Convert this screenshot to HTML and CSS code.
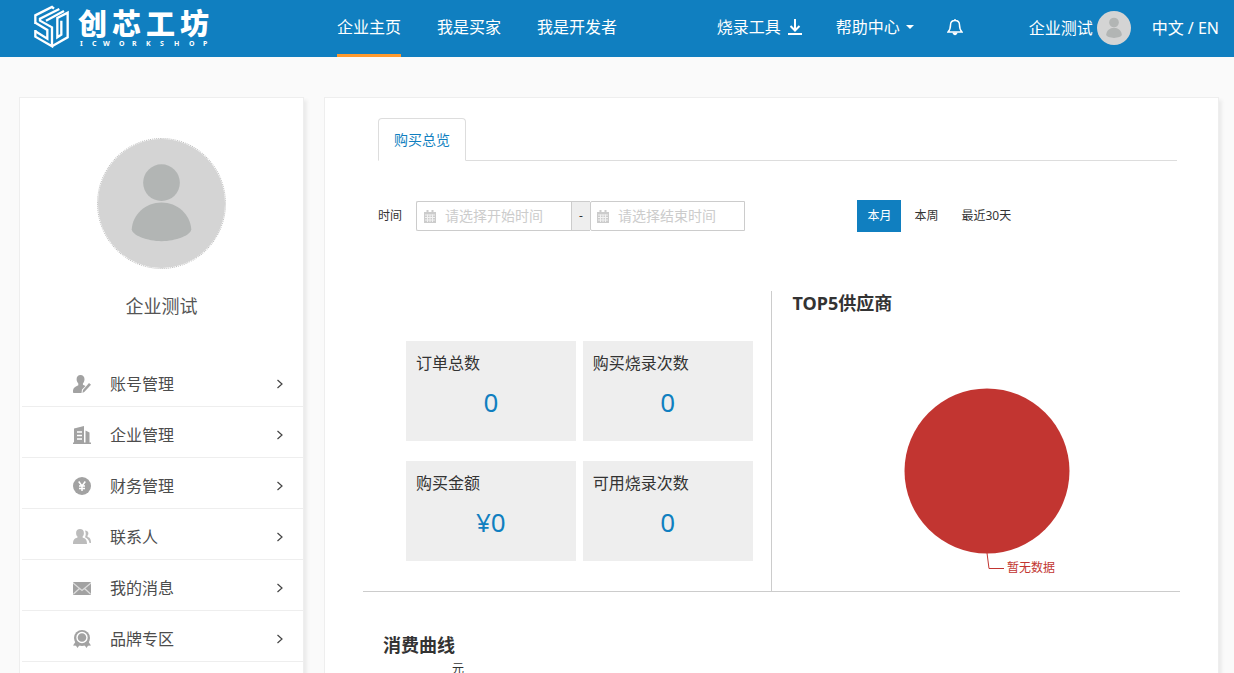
FILE: index.html
```html
<!DOCTYPE html>
<html lang="zh-CN">
<head>
<meta charset="utf-8">
<title>创芯工坊</title>
<link rel="stylesheet" href="styles.css">
</head>
<body>
<svg class="sprite" aria-hidden="true">
  <symbol id="person" viewBox="0 0 128 130">
    <circle cx="64" cy="44" r="18.500"/>
    <path d="M34 91C35 76 48 64 64 64S93 76 94 91C94 97 78 103 64 103S34 97 34 91Z"/>
  </symbol>
  <symbol id="chevron" viewBox="0 0 8 10"><path d="M1.500 1L6 5L1.500 9" fill="none" stroke="#444" stroke-width="1.200"/></symbol>
  <symbol id="calendar" viewBox="0 0 12 13">
    <path d="M0 2h12v11H0z"/><path d="M2.500 0h2v3h-2zM7.500 0h2v3h-2z"/>
    <path d="M1 5h10M1 7.500h10M1 10h10M3.500 4.500v7.500M6 4.500v7.500M8.500 4.500v7.500" stroke="#fff" stroke-width="1" opacity=".75"/>
  </symbol>
</svg>

<header class="topbar">
  <a class="logo" href="#" aria-label="创芯工坊">
    <svg width="180" height="54" viewBox="0 0 180 54">
      <g transform="translate(-13 0) scale(.3333)" fill="none" stroke="#fff" stroke-width="7">
        <path d="M46 72V46L96 21L102 26"/>
        <path d="M46 68L82 90V116L46 94"/>
        <path d="M46 90V110L96 139V82L60 62V56L118 27"/>
        <path d="M78 62L132 33"/>
        <path d="M96 139L143 112V38L112 54V112L124 104V62"/>
      </g>
      <text class="logo-name" x="45 79 113 147" y="35">创芯工坊</text>
      <text class="logo-sub" x="47 59 70 86 99 113 127 141 156 170" y="46">ICWORKSHOP</text>
    </svg>
  </a>
  <nav class="main-nav">
    <a class="active" href="#">企业主页</a>
    <a href="#">我是买家</a>
    <a href="#">我是开发者</a>
  </nav>
  <nav class="tools">
    <a href="#">烧录工具
      <svg width="16" height="16" viewBox="0 0 16 16" fill="none" stroke="#fff" stroke-width="2"><path d="M8 0v11M3.500 7L8 11.500L12.500 7M1 15h14"/></svg>
    </a>
    <a href="#">帮助中心
      <svg width="8" height="4" viewBox="0 0 8 4" fill="#fff"><path d="M0 0h8L4 4z"/></svg>
    </a>
    <a href="#" aria-label="通知">
      <svg width="16" height="18" viewBox="0 0 16 18" fill="none" stroke="#fff" stroke-width="1.500"><path d="M8 1v1.500M1 14c2-2 2.500-3.500 2.500-7C3.500 4 5.500 2.500 8 2.500S12.500 4 12.500 7c0 3.500.5 5 2.500 7z"/><path d="M5.500 14.500h5C10 18 6 18 5.500 14.500z" fill="#fff" stroke="none"/></svg>
    </a>
  </nav>
  <div class="account">
    <a class="user" href="#">企业测试 <svg class="mini-avatar"><use href="#person"/></svg></a>
    <a href="#">中文 / EN</a>
  </div>
</header>

<div class="layout">
  <aside class="card sidebar">
    <svg class="avatar"><use href="#person"/></svg>
    <h2 class="company">企业测试</h2>
    <nav class="menu">
      <a href="#">
        <svg class="icon" viewBox="0 0 18 18"><path d="M7.500 0C10 0 11.500 1.700 11.500 4.200c0 2-.8 3.200-1.600 4.200v1.400l2.600 1.200L9 14.500 8.500 18H1c-.7 0-1-.4-1-1.200 0-3.800 1.500-4.800 5.300-6.600V8.400C4.300 7.300 3.600 6 3.600 4.200 3.600 1.700 5 0 7.500 0z"/><path d="M16 8l2 1.800-6.500 7L9.500 18l.5-3z"/></svg>
        <span>账号管理</span><svg class="chevron"><use href="#chevron"/></svg>
      </a>
      <a href="#">
        <svg class="icon" viewBox="0 0 18 18"><path d="M0 16.500h1V2.500L11 0v16.500h1.500V4.500l4 2v10H18V18H0z"/><path d="M4 6h5M4 9.500h5M4 13h5" stroke="#fff" stroke-width="1.500"/></svg>
        <span>企业管理</span><svg class="chevron"><use href="#chevron"/></svg>
      </a>
      <a href="#">
        <svg class="icon" viewBox="0 0 18 18"><circle cx="9" cy="9" r="9"/><path d="M5.700 4.500L9 9l3.300-4.500M9 9v5M6 9h6M6 11.500h6" fill="none" stroke="#fff" stroke-width="1.500"/></svg>
        <span>财务管理</span><svg class="chevron"><use href="#chevron"/></svg>
      </a>
      <a href="#">
        <svg class="icon pale" viewBox="0 0 18 18"><path d="M7 1c2.500 0 3.900 1.600 3.900 3.900 0 1.700-.6 2.800-1.300 3.600v1C12.500 10.600 14 11.500 14 16H0c0-4.500 1.500-5.400 4.500-6.500v-1C3.700 7.700 3.100 6.600 3.100 4.900 3.100 2.600 4.500 1 7 1z"/><path d="M12 2.500c3 0 4.500 2.800 2.500 5.300v1c2.500 1 3.500 2.200 3.500 6.200h-1.500C16 12 14.500 10.500 12 9.300c1-2.300 1-4.500 0-6.800z"/></svg>
        <span>联系人</span><svg class="chevron"><use href="#chevron"/></svg>
      </a>
      <a href="#">
        <svg class="icon" viewBox="0 0 18 18"><rect y="3" width="18" height="13" rx="1"/><path d="M0 4l9 7.500L18 4M0.500 15L6.500 9.500M17.500 15L11.500 9.500" fill="none" stroke="#ddd" stroke-width="1.300"/></svg>
        <span>我的消息</span><svg class="chevron"><use href="#chevron"/></svg>
      </a>
      <a href="#">
        <svg class="icon" viewBox="0 0 18 18"><path d="M3 11L0 15.500l3 .2L4.500 18 8 13h2l3.500 5 1.500-2.300 3-.2L15 11z"/><circle cx="9" cy="8" r="8"/><circle cx="9" cy="7.500" r="5" fill="none" stroke="#fff" stroke-width="1.400"/></svg>
        <span>品牌专区</span><svg class="chevron"><use href="#chevron"/></svg>
      </a>
    </nav>
  </aside>

  <main class="card content">
    <div class="tabs"><a class="tab" href="#">购买总览</a></div>

    <form class="filters">
      <div class="range">
        <label for="start">时间</label>
        <div class="field"><svg class="cal"><use href="#calendar"/></svg><input id="start" type="text" placeholder="请选择开始时间"></div>
        <span class="dash">-</span>
        <div class="field last"><svg class="cal"><use href="#calendar"/></svg><input type="text" aria-label="结束时间" placeholder="请选择结束时间"></div>
      </div>
      <div class="periods">
        <button class="on" type="button">本月</button>
        <button type="button">本周</button>
        <button type="button">最近30天</button>
      </div>
    </form>

    <section class="summary">
      <div class="stats">
        <div class="stat"><h3>订单总数</h3><p>0</p></div>
        <div class="stat"><h3>购买烧录次数</h3><p>0</p></div>
        <div class="stat"><h3>购买金额</h3><p>¥0</p></div>
        <div class="stat"><h3>可用烧录次数</h3><p>0</p></div>
      </div>
      <div class="suppliers">
        <h2>TOP5供应商</h2>
        <svg class="pie" width="300" height="204" viewBox="0 0 300 204">
          <circle cx="151" cy="95" r="82.500" fill="#c23531"/>
          <path d="M151 177L153 192.500H168" fill="none" stroke="#c23531"/>
          <text x="171" y="196">暂无数据</text>
        </svg>
      </div>
    </section>

    <section class="curve">
      <h2>消费曲线</h2>
      <p>元</p>
    </section>
  </main>
</div>
</body>
</html>
```
FILE: styles.css
```css
* { box-sizing: border-box; }

body {
  display: flex;
  flex-direction: column;
  height: 100vh;
  margin: 0;
  overflow: hidden;
  background: #fafafa;
  color: #333;
  font: 16px/24px "Noto Sans", "Noto Sans CJK SC", sans-serif;
}

h2, h3, p { margin: 0; }
a { color: inherit; text-decoration: none; }
svg { flex: none; }
.sprite { position: absolute; width: 0; height: 0; }

/* Top bar */
.topbar {
  display: flex;
  flex: none;
  height: 57px;
  padding: 0 15px 0 33px;
  background: #107fc0;
  color: #fff;
}
.logo { width: 304px; }
.logo svg { display: block; }
.logo-name { font: 900 29px "Noto Sans CJK SC", sans-serif; fill: #fff; }
.logo-sub { font: 700 7px "Noto Sans", sans-serif; fill: #fff; }
.main-nav { display: flex; gap: 36px; }
.main-nav a { padding-top: 15px; white-space: nowrap; }
.main-nav .active { border-bottom: 3px solid #ff9a2e; }
.tools { display: flex; gap: 33px; margin-left: auto; height: 54px; }
.tools a { display: flex; align-items: center; gap: 6px; white-space: nowrap; }
.account { display: flex; gap: 21px; height: 56px; align-items: center; margin-left: 66px; white-space: nowrap; }
.user { display: flex; align-items: center; gap: 4px; }
.mini-avatar { width: 34px; height: 34px; border-radius: 50%; background: #d4d4d4; fill: #b2b5b4; }

/* Page columns */
.layout {
  display: grid;
  flex: 1;
  grid-template-columns: 285px 1fr;
  gap: 20px;
  min-height: 0;
  padding: 40px 15px 0 19px;
}
.card {
  border: 1px solid #eee;
  border-bottom: 0;
  background: #fff;
  box-shadow: 3px 3px 3px #ececec;
}

/* Sidebar */
.sidebar { display: flex; flex-direction: column; align-items: center; padding-top: 40px; }
.avatar {
  width: 129px;
  height: 131px;
  border: 1px dotted #bbb;
  border-radius: 50%;
  background: #d4d4d4 content-box;
  fill: #b2b5b4;
}
.company { margin-top: 25px; color: #555; font-size: 18px; font-weight: 400; }
.menu { align-self: stretch; margin-top: 38px; padding-left: 2px; }
.menu a {
  display: flex;
  align-items: center;
  height: 51px;
  padding: 6px 19px 0 51px;
  border-bottom: 1px solid #eee;
  color: #4c4c4c;
}
.icon { width: 18px; height: 18px; margin-right: 19px; fill: #a2a2a2; }
.icon.pale { fill: #bcbcbc; }
.chevron { width: 8px; height: 10px; margin-left: auto; }

/* Content */
.content { padding: 20px 38px 0; }
.tabs { display: flex; height: 43px; margin: 0 3px 0 15px; border-bottom: 1px solid #ddd; }
.tab {
  height: 43px;
  padding: 9px 15px;
  border: 1px solid #ddd;
  border-bottom-color: #fff;
  border-radius: 4px 4px 0 0;
  color: #107fc0;
  font-size: 14px;
}

.filters {
  display: grid;
  grid-template-columns: 60% 1fr;
  align-items: center;
  margin: 39px 3px 0 15px;
  font-size: 12px;
}
.range { display: flex; height: 30px; line-height: 30px; }
.range label { width: 38px; }
.field {
  display: flex;
  align-items: center;
  width: 155px;
  padding-left: 7px;
  border: 1px solid #ccc;
  border-right: 0;
  border-radius: 2px 0 0 2px;
}
.field.last { padding-left: 6px; border-right: 1px solid #ccc; }
.cal { width: 12px; height: 13px; fill: #ccc; }
.field input {
  width: 120px;
  margin-left: 9px;
  padding: 0;
  border: 0;
  outline: 0;
  background: none;
  color: #333;
  font: inherit;
  font-size: 14px;
}
.field input::placeholder { color: #ccc; }
.dash {
  width: 19px;
  border: 1px solid #ccc;
  border-right: 0;
  background: #eee;
  line-height: 28px;
  text-align: center;
}
.periods { display: flex; gap: 3px; }
.periods button {
  height: 32px;
  padding: 0 10px;
  border: 0;
  background: none;
  color: #333;
  font: inherit;
}
.periods .on { background: #107fc0; color: #fff; }

.summary {
  display: grid;
  grid-template-columns: 1fr 1fr;
  margin-top: 59px;
  border-bottom: 1px solid #ccc;
}
.stats {
  display: grid;
  grid-template-columns: 1fr 1fr;
  gap: 20px 7px;
  padding: 50px 18px 30px 43px;
  border-right: 1px solid #ccc;
}
.stat { height: 100px; padding: 10px; background: #eee; }
.stat h3 { font-size: 16px; font-weight: 400; }
.stat p { margin-top: 11px; color: #107fc0; font-size: 26px; line-height: 32px; text-align: center; }
.suppliers { padding-left: 21px; }
.suppliers h2, .curve h2 { font-size: 18px; font-weight: 700; }
.pie { display: block; margin: 61px auto 0; }
.pie text { fill: #c23531; font-size: 12px; }

.curve { padding: 41px 20px 0; }
.curve p { margin-left: 69px; font-size: 12px; }
```
